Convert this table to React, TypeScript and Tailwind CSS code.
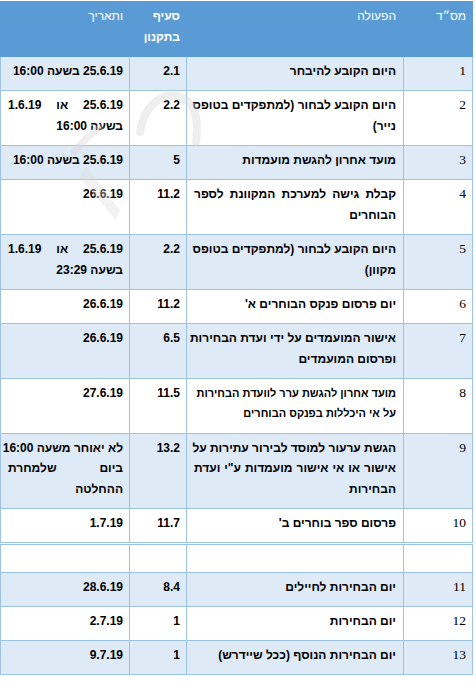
import React from "react"

type Line = string | { t: string; j: boolean }

interface Row {
  n: string
  action: Line[]
  sec: string
  date: Line[]
  narrow?: boolean
  empty?: boolean
}

const J = (t: string): Line => ({ t, j: true })

const topRows: Row[] = [
  { n: "1", action: ["היום הקובע להיבחר"], sec: "2.1", date: ["25.6.19 בשעה 16:00"] },
  {
    n: "2",
    action: [J("היום הקובע לבחור (למתפקדים בטופס"), "נייר)"],
    sec: "2.2",
    date: [J("25.6.19 או 1.6.19"), "בשעה 16:00"],
  },
  { n: "3", action: ["מועד אחרון להגשת מועמדות"], sec: "5", date: ["25.6.19 בשעה 16:00"] },
  {
    n: "4",
    action: [J("קבלת גישה למערכת המקוונת לספר"), "הבוחרים"],
    sec: "11.2",
    date: ["26.6.19"],
  },
  {
    n: "5",
    action: [J("היום הקובע לבחור (למתפקדים בטופס"), "מקוון)"],
    sec: "2.2",
    date: [J("25.6.19 או 1.6.19"), "בשעה 23:29"],
  },
  { n: "6", action: ["יום פרסום פנקס הבוחרים א'"], sec: "11.2", date: ["26.6.19"] },
  {
    n: "7",
    action: [J("אישור המועמדים על ידי ועדת הבחירות"), "ופרסום המועמדים"],
    sec: "6.5",
    date: ["26.6.19"],
  },
  {
    n: "8",
    action: ["מועד אחרון להגשת ערר לוועדת הבחירות", "על אי היכללות בפנקס הבוחרים"],
    sec: "11.5",
    date: ["27.6.19"],
    narrow: true,
  },
  {
    n: "9",
    action: [
      J("הגשת ערעור למוסד לבירור עתירות על"),
      J("אישור או אי אישור מועמדות ע\"י ועדת"),
      "הבחירות",
    ],
    sec: "13.2",
    date: [J("לא יאוחר משעה 16:00"), J("ביום שלמחרת"), "ההחלטה"],
  },
  { n: "10", action: ["פרסום ספר בוחרים ב'"], sec: "11.7", date: ["1.7.19"] },
]

const bottomRows: Row[] = [
  { n: "", action: [], sec: "", date: [], empty: true },
  { n: "11", action: ["יום הבחירות לחיילים"], sec: "8.4", date: ["28.6.19"] },
  { n: "12", action: ["יום הבחירות"], sec: "1", date: ["2.7.19"] },
  { n: "13", action: ["יום הבחירות הנוסף (ככל שיידרש)"], sec: "1", date: ["9.7.19"] },
]

const Lines = ({ lines }: { lines: Line[] }) => (
  <>
    {lines.map((l, i) =>
      typeof l === "string" ? (
        <div key={i} className="whitespace-nowrap">
          {l}
        </div>
      ) : (
        <div key={i} className="text-justify [text-align-last:justify] whitespace-nowrap">
          {l.t}
        </div>
      ),
    )}
  </>
)

const Cols = () => (
  <colgroup>
    <col className="w-[69px]" />
    <col className="w-[217px]" />
    <col className="w-[57px]" />
    <col className="w-[129px]" />
  </colgroup>
)

const cell = "border border-[#9cc2e5] align-top pt-[4px] leading-[20.5px]"
const head = "border border-[#5b9bd5] align-top pt-[4px] pb-[9px] leading-[20.5px] text-right"

const Body = ({ rows, startBlue }: { rows: Row[]; startBlue: boolean }) => (
  <tbody>
    {rows.map((r, i) => {
      const blue = startBlue ? i % 2 === 0 : i % 2 === 1
      const c = `${cell} ${r.empty ? "pb-[2px]" : "pb-[8.75px]"}`
      return (
        <tr key={i} className={blue ? "bg-[#deeaf6]" : "bg-white"}>
          <td className={`${c} pr-[6px] text-[13.5px] font-['Liberation_Serif',serif]`}>
            {r.n || "\u00a0"}
          </td>
          <td className={`${c} px-[7px] font-bold ${r.narrow ? "text-[11px]" : ""}`}>
            <Lines lines={r.action} />
          </td>
          <td className={`${c} pr-[6px] font-bold`}>{r.sec}</td>
          <td className={`${c} pr-[6px] pl-[7px] font-bold`}>
            <Lines lines={r.date} />
          </td>
        </tr>
      )
    })}
  </tbody>
)

export default function App() {
  return (
    <div className="relative w-[476px] h-[684px] bg-white text-black text-[12px] font-['Liberation_Sans','DejaVu_Sans',sans-serif] overflow-hidden">
      <div className="flex flex-col gap-[1px] pt-[1px] w-[472px]">
        <table dir="rtl" className="w-[472px] table-fixed border-collapse">
          <Cols />
          <thead>
            <tr className="bg-[#5b9bd5] text-white">
              <th className={`${head} pr-[6px] font-normal`}>מס״ד</th>
              <th className={`${head} px-[7px] font-normal`}>הפעולה</th>
              <th className={`${head} pr-[6px] font-bold`}>
                <div>סעיף</div>
                <div>בתקנון</div>
              </th>
              <th className={`${head} pr-[6px] font-normal`}>ותאריך</th>
            </tr>
          </thead>
          <Body rows={topRows} startBlue />
        </table>
        <table dir="rtl" className="w-[472px] table-fixed border-collapse">
          <Cols />
          <Body rows={bottomRows} startBlue={false} />
        </table>
      </div>

      {/* faint watermark over the upper rows */}
      <svg
        className="absolute left-[60px] top-[70px] pointer-events-none"
        width="160"
        height="170"
        viewBox="0 0 160 170"
      >
        <path
          d="M80 62 C 84 36, 100 24, 116 26 C 132 28, 140 44, 136 72"
          fill="none"
          stroke="#d4d4d4"
          strokeWidth="8"
          strokeLinecap="round"
          opacity="0.4"
        />
        <path
          d="M14 82 C 24 70, 32 62, 40 58"
          fill="none"
          stroke="#d6d6d6"
          strokeWidth="7"
          strokeLinecap="round"
          opacity="0.4"
        />
        <path d="M26 96 L 60 140 L 56 150 L 20 108 Z" fill="#d9d9d9" opacity="0.35" />
      </svg>
    </div>
  )
}
